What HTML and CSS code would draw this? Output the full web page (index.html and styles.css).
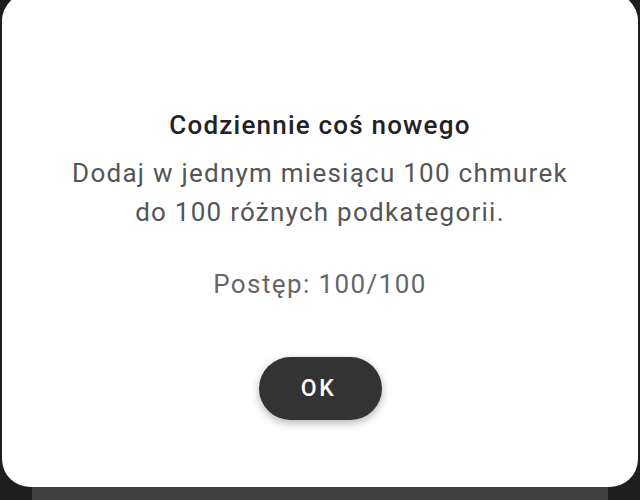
FILE: index.html
```html
<!DOCTYPE html>
<html lang="pl">
<head>
  <meta charset="UTF-8" />
  <meta name="viewport" content="width=device-width, initial-scale=1.0"/>
  <title>Osiągnięcie</title>
  <link rel="stylesheet" href="styles.css">
</head>
<body>
  <!-- Okno osiągnięcia -->
  <div class="dialog">
    <h2 class="dialog-title">Codziennie coś nowego</h2>
    <p class="dialog-text">Dodaj w jednym miesiącu 100 chmurek<br>do 100 różnych podkategorii.</p>
    <p class="dialog-progress">Postęp: 100/100</p>
    <button class="ok-btn">OK</button>
  </div>

  <!-- Przyciemniona zawartość pod spodem -->
  <div class="under-panel"></div>
</body>
</html>
```

FILE: styles.css
```css
html, body {
  height: 100%;
}

body {
  margin: 0;
  background-color: #1e1e1e;
  font-family: Roboto, "Noto Sans", sans-serif;
  display: flex;
  flex-direction: column;
  overflow: hidden;
}

.dialog {
  margin: -7px 2px 0;
  padding: 116px 20px 67px;
  background-color: #ffffff;
  border-radius: 28px;
  display: flex;
  flex-direction: column;
  align-items: center;
  text-align: center;
}

.dialog-title {
  margin: 0;
  font-size: 26px;
  line-height: 32px;
  font-weight: 500;
  letter-spacing: 1.2px;
  color: #222222;
}

.dialog-text {
  margin: 13px 0 0;
  font-size: 26px;
  line-height: 39px;
  letter-spacing: 1.25px;
  color: #555555;
}

.dialog-progress {
  margin: 33px 0 0;
  font-size: 26px;
  line-height: 39px;
  letter-spacing: 1.4px;
  color: #666666;
}

.ok-btn {
  margin-top: 53px;
  width: 123px;
  height: 63px;
  border: none;
  border-radius: 32px;
  background-color: #333333;
  color: #ffffff;
  font-family: Roboto, "Noto Sans", sans-serif;
  font-size: 23px;
  font-weight: 500;
  letter-spacing: 2.5px;
  padding-left: 3px;
  box-shadow: 0 3px 8px rgba(0, 0, 0, 0.3);
  cursor: pointer;
}

.under-panel {
  flex-grow: 1;
  margin: 0 32px;
  background-color: #414141;
}
```
